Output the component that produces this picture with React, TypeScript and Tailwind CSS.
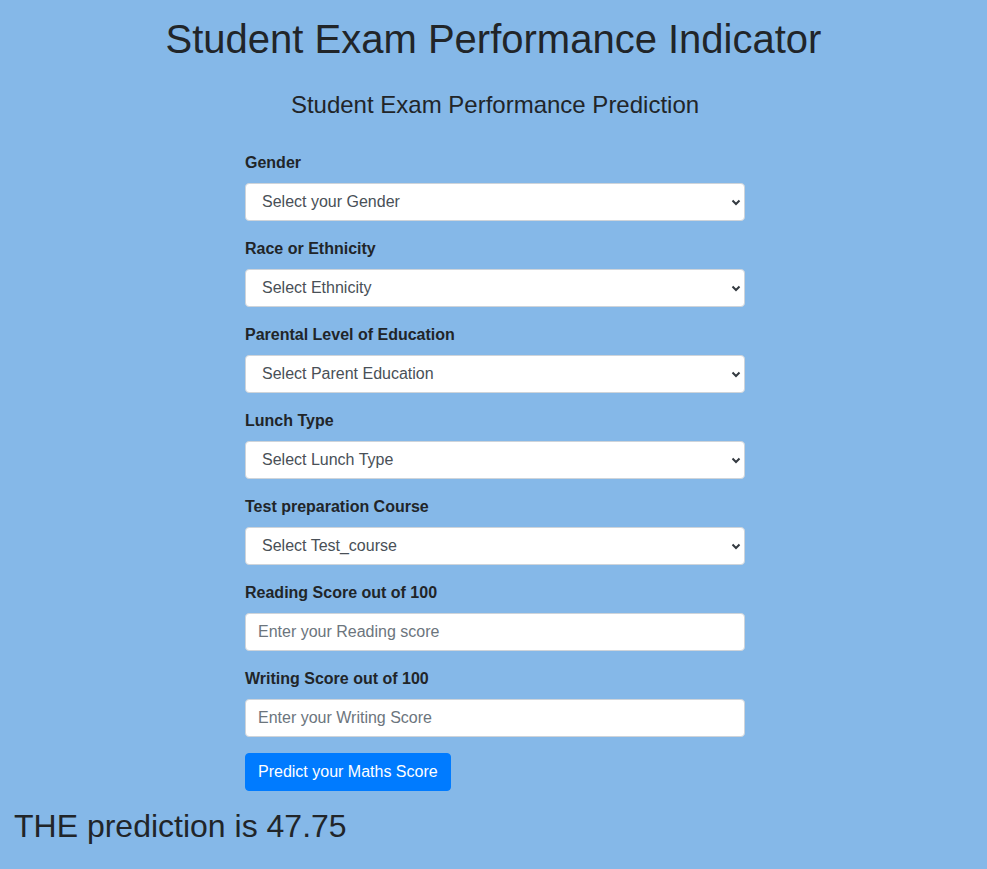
import React from 'react'

const font = { fontFamily: '"Liberation Sans", Arial, sans-serif' }

type SelectField = { label: string; placeholder: string }

const selects: SelectField[] = [
  { label: 'Gender', placeholder: 'Select your Gender' },
  { label: 'Race or Ethnicity', placeholder: 'Select Ethnicity' },
  { label: 'Parental Level of Education', placeholder: 'Select Parent Education' },
  { label: 'Lunch Type', placeholder: 'Select Lunch Type' },
  { label: 'Test preparation Course', placeholder: 'Select Test_course' },
]

const inputs = [
  { label: 'Reading Score out of 100', placeholder: 'Enter your Reading score' },
  { label: 'Writing Score out of 100', placeholder: 'Enter your Writing Score' },
]

function Chevron() {
  return (
    <svg className="pointer-events-none absolute right-[4px] top-1/2 -translate-y-1/2" width="10" height="10" viewBox="0 0 10 10">
      <path d="M1.5 3.5 L5 7 L8.5 3.5" fill="none" stroke="#343a40" strokeWidth="2" />
    </svg>
  )
}

export default function App() {
  return (
    <div className="min-h-[869px] bg-[#85b8e8] text-[#212529]" style={font}>
      <div className="pt-[15px] text-center">
        <h1 className="mb-[27px] text-[40px] leading-[48px]">Student Exam Performance Indicator</h1>
      </div>
      <div className="flex justify-center pl-[3px]">
        <form className="w-[500px]" onSubmit={(e) => e.preventDefault()}>
          <fieldset>
            <legend className="mb-[32px] w-full text-center text-[24px] leading-[29px]">
              Student Exam Performance Prediction
            </legend>

            {selects.map((s) => (
              <div key={s.label} className="mb-[16px]">
                <label className="mb-[8px] block text-[16px] font-bold leading-[24px]">{s.label}</label>
                <div className="relative">
                  <select
                    defaultValue=""
                    className="block h-[38px] w-full appearance-none rounded-[4px] border border-[#ced4da] bg-white pl-[16px] pr-[28px] text-[16px] text-[#495057]"
                  >
                    <option value="" disabled>
                      {s.placeholder}
                    </option>
                  </select>
                  <Chevron />
                </div>
              </div>
            ))}

            {inputs.map((f) => (
              <div key={f.label} className="mb-[16px]">
                <label className="mb-[8px] block text-[16px] font-bold leading-[24px]">{f.label}</label>
                <input
                  type="number"
                  placeholder={f.placeholder}
                  className="block h-[38px] w-full rounded-[4px] border border-[#ced4da] bg-white px-[12px] text-[16px] text-[#495057] placeholder:text-[#6c757d]"
                />
              </div>
            ))}

            <button
              type="submit"
              className="h-[38px] rounded-[4px] border border-[#007bff] bg-[#007bff] px-[12px] text-[16px] leading-[24px] text-white"
            >
              Predict your Maths Score
            </button>
          </fieldset>
        </form>
      </div>
      <h2 className="mt-[16px] pl-[14px] text-[32px] leading-[38px]">THE prediction is 47.75</h2>
    </div>
  )
}
